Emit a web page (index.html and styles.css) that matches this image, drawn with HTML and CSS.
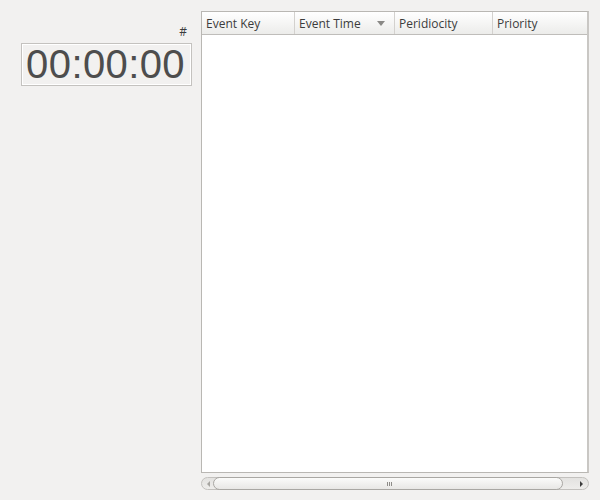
FILE: index.html
```html
<!DOCTYPE html>
<html>
<head>
<meta charset="utf-8">
<link rel="stylesheet" href="styles.css">
</head>
<body>
<div class="app">
  <div class="left">
    <div class="hash">#</div>
    <div class="timer">00:00:00</div>
  </div>
  <div class="right">
    <div class="table">
      <div class="thead">
        <div class="th c1">Event Key</div>
        <div class="th c2">Event Time<span class="sort"></span></div>
        <div class="th c3">Peridiocity</div>
        <div class="th c4">Priority</div>
      </div>
      <div class="tbody"></div>
    </div>
    <div class="hscroll">
      <span class="arr left-arr"></span>
      <div class="thumb"><span class="grip"></span></div>
      <span class="arr right-arr"></span>
    </div>
  </div>
</div>
</body>
</html>
```
FILE: styles.css
```css
html, body {
  margin: 0;
  padding: 0;
  background: #f2f1f0;
  width: 600px;
  height: 500px;
  overflow: hidden;
  font-family: "Open Sans", "DejaVu Sans", sans-serif;
}
.app {
  display: flex;
  padding-top: 11px;
}
.left {
  width: 201px;
  box-sizing: border-box;
  padding: 13px 9px 0 21px;
  display: flex;
  flex-direction: column;
}
.hash {
  text-align: right;
  font-size: 12px;
  line-height: 16px;
  color: #3c3c3c;
  padding-right: 5px;
  height: 19px;
}
.timer {
  height: 43px;
  box-sizing: border-box;
  border: 1px solid #c4c2bf;
  box-shadow: inset 1px 1px 0 #ffffff, inset -1px -1px 0 #ffffff;
  font-family: "Liberation Sans", "DejaVu Sans", sans-serif;
  font-size: 40px;
  line-height: 41px;
  color: #4d4d4d;
  text-align: right;
  padding-right: 6px;
  letter-spacing: 0.4px;
}
.right {
  width: 388px;
  display: flex;
  flex-direction: column;
}
.table {
  height: 462px;
  box-sizing: border-box;
  border: 1px solid #b9b7b3;
  border-right: 2px solid #c9c7c4;
  background: #ffffff;
  display: flex;
  flex-direction: column;
}
.thead {
  display: flex;
  height: 23px;
  box-sizing: border-box;
  border-bottom: 1px solid #bfbdba;
  background: linear-gradient(#ffffff, #ececea);
}
.th {
  position: relative;
  box-sizing: border-box;
  font-size: 12px;
  color: #3c3c3c;
  line-height: 23px;
  padding-left: 4px;
  border-right: 1px solid #d3d1ce;
}
.c1 { width: 93px; }
.c2 { width: 100px; }
.c3 { width: 98px; }
.c4 { flex: 1; border-right: none; }
.sort {
  position: absolute;
  right: 9px;
  top: 9px;
  width: 0;
  height: 0;
  border-left: 4px solid transparent;
  border-right: 4px solid transparent;
  border-top: 5px solid #8a8986;
}
.tbody { flex: 1; }
.hscroll {
  margin-top: 4px;
  height: 13px;
  box-sizing: border-box;
  border: 1px solid #c3c1be;
  border-radius: 7px;
  background: linear-gradient(#e3e2e0, #eeedeb);
  display: flex;
  align-items: center;
  position: relative;
}
.thumb {
  position: absolute;
  left: 11px;
  right: 25px;
  top: -1px;
  bottom: -1px;
  border: 1px solid #a9a7a3;
  border-radius: 7px;
  background: linear-gradient(#fbfbfa, #e8e7e5);
  display: flex;
  justify-content: center;
  align-items: center;
}
.grip {
  width: 5px;
  height: 4px;
  margin-left: 3px;
  background: repeating-linear-gradient(90deg, #8e8c88 0 1px, transparent 1px 2px);
}
.arr {
  position: absolute;
  top: 3px;
  width: 0;
  height: 0;
  border-top: 3px solid transparent;
  border-bottom: 3px solid transparent;
}
.left-arr {
  left: 5px;
  border-right: 3px solid #a6a4a0;
}
.right-arr {
  right: 5px;
  border-left: 3px solid #3c3c3c;
}
```
